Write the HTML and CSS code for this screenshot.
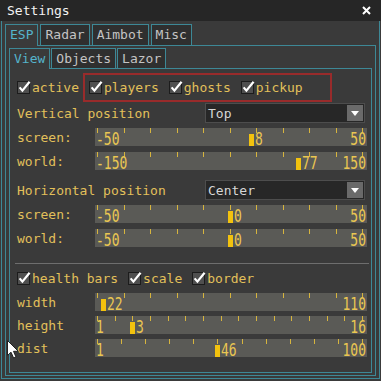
FILE: index.html
```html
<!DOCTYPE html>
<html lang="en">
<head>
    <meta charset="UTF-8">
    <meta name="viewport" content="width=device-width, initial-scale=1.0">
    <title>Settings</title>
    <link rel="stylesheet" href="styles.css">
</head>
<body>
<div class="window">
    <div class="titlebar">
        <span class="title">Settings</span>
        <svg class="close" width="9" height="9" viewBox="0 0 9 9"><path d="M1 1L8 8M8 1L1 8" stroke="#fff" stroke-width="2"/></svg>
    </div>
    <div class="frame">
        <div class="tabs">
            <div class="tab active">ESP</div>
            <div class="tab">Radar</div>
            <div class="tab">Aimbot</div>
            <div class="tab">Misc</div>
        </div>
        <div class="panel">
            <div class="tabs sub">
                <div class="tab active">View</div>
                <div class="tab">Objects</div>
                <div class="tab">Lazor</div>
            </div>
            <div class="subpanel">
                <div class="check-row">
                    <label class="check"><span class="box"></span>active</label>
                    <div class="group">
                        <label class="check"><span class="box"></span>players</label>
                        <label class="check"><span class="box"></span>ghosts</label>
                        <label class="check"><span class="box"></span>pickup</label>
                    </div>
                </div>

                <div class="combo-row">
                    <span class="label wide">Vertical position</span>
                    <div class="combo"><span>Top</span><span class="combo-btn"></span></div>
                </div>
                <div class="slider-row first">
                    <span class="label">screen:</span>
                    <div class="slider" data-min="-50" data-max="50" data-value="8" data-ticks="11"></div>
                </div>
                <div class="slider-row">
                    <span class="label">world:</span>
                    <div class="slider" data-min="-150" data-max="150" data-value="77" data-ticks="11"></div>
                </div>

                <div class="combo-row spaced">
                    <span class="label wide">Horizontal position</span>
                    <div class="combo"><span>Center</span><span class="combo-btn"></span></div>
                </div>
                <div class="slider-row first">
                    <span class="label">screen:</span>
                    <div class="slider" data-min="-50" data-max="50" data-value="0" data-ticks="11"></div>
                </div>
                <div class="slider-row">
                    <span class="label">world:</span>
                    <div class="slider" data-min="-50" data-max="50" data-value="0" data-ticks="11"></div>
                </div>

                <div class="sep"></div>

                <div class="check-row health">
                    <label class="check"><span class="box"></span>health bars</label>
                    <label class="check"><span class="box"></span>scale</label>
                    <label class="check"><span class="box"></span>border</label>
                </div>
                <div class="slider-row first">
                    <span class="label">width</span>
                    <div class="slider" data-min="20" data-max="110" data-value="22" data-ticks="11"></div>
                </div>
                <div class="slider-row first">
                    <span class="label">height</span>
                    <div class="slider" data-min="1" data-max="16" data-value="3" data-ticks="16"></div>
                </div>
                <div class="slider-row first">
                    <span class="label">dist</span>
                    <div class="slider" data-min="1" data-max="100" data-value="46" data-ticks="12"></div>
                </div>
            </div>
        </div>
    </div>
    <svg class="cursor" width="13" height="19" viewBox="0 0 13 19"><path d="M0.5 0.5L0.5 15.5L4 12.2L6.6 18L9 17L6.5 11.3L11.3 11.3Z" fill="#fff" stroke="#222" stroke-width="1"/></svg>
</div>
<script>
let checkSvg = '<svg width="13" height="13" viewBox="0 0 13 13"><rect x="0.5" y="0.5" width="12" height="12" fill="#4f4f4f" stroke="#1c1c1c"/><path d="M2.6 6.4L5.4 9.6L12.6 0.8" stroke="#fff" stroke-width="2.2" fill="none"/></svg>';
document.querySelectorAll('.box').forEach(function(b){
    b.innerHTML = checkSvg;
});

// track span between first and last tick
let span = 265;

function addNum(slider, text, side, px){
    let n = document.createElement('span');
    n.className = 'num';
    n.textContent = text;
    n.style[side] = px + 'px';
    slider.appendChild(n);
    return n;
}

document.querySelectorAll('.slider').forEach(function(s){
    let min = +s.dataset.min, max = +s.dataset.max, val = +s.dataset.value;
    let ticks = +s.dataset.ticks;
    for(let i = 0; i < ticks; i++){
        let t = document.createElement('span');
        t.className = 'tick';
        t.style.left = (2 + Math.round(i * span / (ticks - 1))) + 'px';
        s.appendChild(t);
    }
    let pos = Math.round(2 + (val - min) / (max - min) * span);
    let knob = document.createElement('span');
    knob.className = 'knob';
    knob.style.left = (pos - 2) + 'px';
    s.appendChild(knob);

    let lo = addNum(s, min, 'left', 1);
    addNum(s, max, 'right', 1);
    let v = addNum(s, val, 'left', pos + 4);
    if(pos + 4 < 1 + lo.offsetWidth + 2){
        lo.style.visibility = 'hidden';
    }
});
</script>
</body>
</html>
```

FILE: styles.css
```css
*{
    box-sizing: border-box;
}

body{
    margin: 0;
    background: #3a3a3a;
    font-family: "DejaVu Sans Mono", "Liberation Mono", monospace;
    font-size: 13px;
    color: #e2c05a;
}

.window{
    width: 381px;
    height: 381px;
    display: flex;
    flex-direction: column;
    position: relative;
    overflow: hidden;
}

.titlebar{
    height: 21px;
    flex: none;
    background: #262626;
    color: #f2f2f2;
    display: flex;
    align-items: center;
    justify-content: space-between;
    padding: 0 10px 0 7px;
}

.frame{
    flex: 1;
    margin: 0 1px 2px 1px;
    border: 1px solid #3d8896;
    border-top: none;
    padding: 3px 3px 2px 3px;
    display: flex;
    flex-direction: column;
}

.tabs{
    display: flex;
    gap: 2px;
    flex: none;
}

.tab{
    height: 21px;
    line-height: 20px;
    padding: 0 4px;
    border: 1px solid #3d8896;
    border-bottom: none;
    background: #2f2f2f;
    color: #c4c4c4;
}

.tab.active{
    position: relative;
    z-index: 1;
    height: 22px;
    margin-bottom: -1px;
    background: #3a3a3a;
    color: #55b4cc;
}

.tabs.sub{
    gap: 1px;
}

.tabs.sub .tab{
    height: 20px;
    line-height: 19px;
}

.tabs.sub .tab.active{
    height: 21px;
}

.panel{
    flex: 1;
    border: 1px solid #3d8896;
    padding: 2px 3px 2px 3px;
    display: flex;
    flex-direction: column;
}

.subpanel{
    flex: 1;
    border: 1px solid #3d8896;
    padding: 4px 4px 0 7px;
    display: flex;
    flex-direction: column;
}

.check-row{
    display: flex;
    align-items: center;
    height: 29px;
    gap: 10px;
}

.check{
    display: flex;
    align-items: center;
    gap: 2px;
    white-space: nowrap;
}

.box{
    display: flex;
    width: 13px;
    height: 13px;
}

.box svg{
    overflow: visible;
}

.group{
    margin-left: -6px;
    width: 249px;
    height: 29px;
    border: 2px solid #992b2b;
    display: flex;
    align-items: center;
    gap: 10px;
    padding-left: 4px;
}

.check-row.health{
    height: 20px;
    margin-top: 4px;
}

.label{
    width: 78px;
    flex: none;
    white-space: nowrap;
}

.label.wide{
    width: 188px;
}

.combo-row{
    display: flex;
    align-items: center;
    height: 20px;
    margin-top: 1px;
}

.combo-row.spaced{
    margin-top: 10px;
}

.combo{
    width: 160px;
    height: 20px;
    background: #272727;
    border: 1px solid #4d4d4d;
    color: #d6d6d6;
    display: flex;
    align-items: center;
    justify-content: space-between;
    padding: 0 1px 0 2px;
}

.combo-btn{
    width: 16px;
    height: 16px;
    background: #6a6a6a;
    position: relative;
}

.combo-btn::after{
    content: "";
    position: absolute;
    left: 4px;
    top: 6px;
    border-left: 4px solid transparent;
    border-right: 4px solid transparent;
    border-top: 5px solid #fff;
}

.slider-row{
    display: flex;
    align-items: center;
    height: 18px;
    margin-top: 6px;
}

.slider-row.first{
    margin-top: 5px;
}

.slider{
    flex: 1;
    height: 18px;
    background: #5a5a56;
    position: relative;
}

.tick{
    position: absolute;
    top: 0;
    width: 1px;
    height: 5px;
    background: #d6b43e;
}

.knob{
    position: absolute;
    top: 6px;
    width: 5px;
    height: 12px;
    background: #f2c20e;
}

.num{
    position: absolute;
    bottom: -2px;
    line-height: 13px;
    color: #eac752;
    transform: scaleY(1.3);
    transform-origin: bottom;
    white-space: nowrap;
}

.sep{
    height: 1px;
    background: #6e6e6e;
    margin: 16px -2px 0 -2px;
    flex: none;
}

.cursor{
    position: absolute;
    left: 7px;
    top: 340px;
}
```
